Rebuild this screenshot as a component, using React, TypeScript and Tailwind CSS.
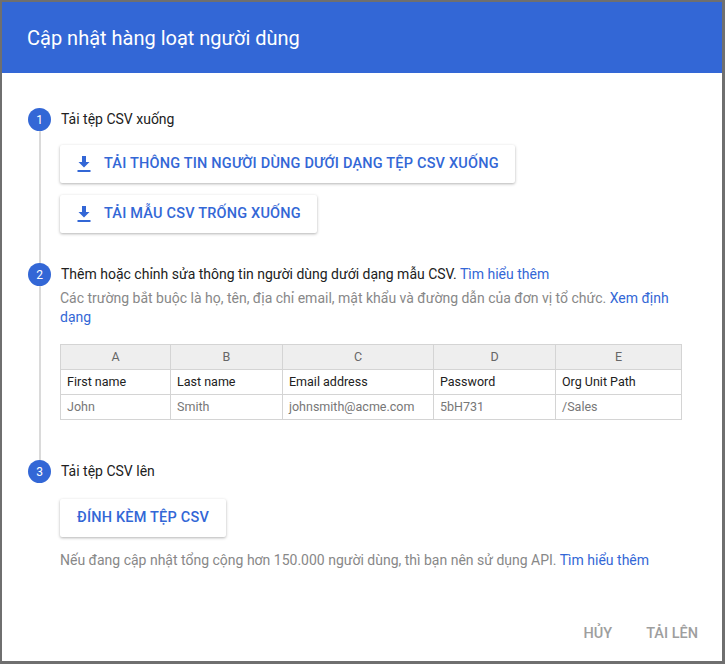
import React from "react";

const Dl = () => (
  <svg width="16" height="18" viewBox="0 0 16 18" className="shrink-0">
    <path d="M6 1h4v6h3.5L8 12.5 2.5 7H6z" fill="#3367d6" />
    <rect x="1.5" y="15" width="13" height="2" fill="#3367d6" />
  </svg>
);

const Circle = ({ n }: { n: number }) => (
  <div className="w-[23px] h-[23px] rounded-full bg-[#3367d6] text-white text-[12px] flex items-center justify-center shrink-0 z-10">{n}</div>
);

const btn = "h-[38px] bg-white rounded-[2px] shadow-[0_1px_3px_rgba(0,0,0,0.3)] flex items-center text-[#3367d6] text-[14.5px] font-medium tracking-[0.2px]";

export default function App() {
  const cols = [
    ["A", "First name", "John", "w-[110px]"],
    ["B", "Last name", "Smith", "w-[112px]"],
    ["C", "Email address", "johnsmith@acme.com", "w-[151px]"],
    ["D", "Password", "5bH731", "w-[122px]"],
    ["E", "Org Unit Path", "/Sales", "flex-1"],
  ];
  return (
    <div className="w-[725px] h-[664px] bg-[#6f6f6f] pt-[2px] pl-[2px] pr-[3px] pb-[3px]" style={{ fontFamily: "Roboto, 'Noto Sans', sans-serif" }}>
      <div className="w-full h-full bg-white flex flex-col">
        <div className="h-[71px] bg-[#3367d6] text-white text-[20px] flex items-center pl-[25px] shrink-0">Cập nhật hàng loạt người dùng</div>
        <div className="relative flex-1 pl-[26px] pr-[40px] pt-[35px]">
          <div className="absolute left-[37px] top-[50px] w-[2px] h-[345px] bg-[#dadada]" />
          <div className="flex items-center gap-[10px]">
            <Circle n={1} />
            <span className="text-[14px] text-[#212121]">Tải tệp CSV xuống</span>
          </div>
          <div className="pl-[32px] mt-[14px] flex flex-col items-start gap-[12px]">
            <div className={btn + " px-[16px] gap-[12px]"}><Dl />TẢI THÔNG TIN NGƯỜI DÙNG DƯỚI DẠNG TỆP CSV XUỐNG</div>
            <div className={btn + " px-[16px] gap-[12px]"}><Dl />TẢI MẪU CSV TRỐNG XUỐNG</div>
          </div>
          <div className="flex items-center gap-[10px] mt-[30px]">
            <Circle n={2} />
            <span className="text-[14px] text-[#212121]">Thêm hoặc chỉnh sửa thông tin người dùng dưới dạng mẫu CSV. <span className="text-[#3367d6]">Tìm hiểu thêm</span></span>
          </div>
          <div className="pl-[32px] mt-[3px] text-[14px] text-[#888] leading-[19px]">
            Các trường bắt buộc là họ, tên, địa chỉ email, mật khẩu và đường dẫn của đơn vị tổ chức. <span className="text-[#3367d6]">Xem định dạng</span>
          </div>
          <div className="ml-[32px] mt-[17px] w-[622px] border border-[#d4d4d4] text-[12.5px] flex">
            {cols.map(([h, a, b, w], i) => (
              <div key={h} className={`${w} flex flex-col ${i < 4 ? "border-r border-[#d4d4d4]" : ""}`}>
                <div className="h-[25px] bg-[#eeeeee] text-[#666] flex items-center justify-center border-b border-[#d4d4d4]">{h}</div>
                <div className="h-[25px] text-[#212121] flex items-center px-[6px] border-b border-[#d4d4d4]">{a}</div>
                <div className="h-[24px] text-[#777] flex items-center px-[6px]">{b}</div>
              </div>
            ))}
          </div>
          <div className="flex items-center gap-[10px] mt-[40px]">
            <Circle n={3} />
            <span className="text-[14px] text-[#212121]">Tải tệp CSV lên</span>
          </div>
          <div className="pl-[32px] mt-[16px]">
            <div className={btn + " px-[17px] inline-flex"}>ĐÍNH KÈM TỆP CSV</div>
          </div>
          <div className="pl-[32px] mt-[13px] text-[14px] text-[#888]">
            Nếu đang cập nhật tổng cộng hơn 150.000 người dùng, thì bạn nên sử dụng API. <span className="text-[#3367d6]">Tìm hiểu thêm</span>
          </div>
          <div className="absolute right-[24px] bottom-[16px] flex gap-[34px] text-[14.5px] font-medium text-[#9e9e9e]">
            <span>HỦY</span>
            <span>TẢI LÊN</span>
          </div>
        </div>
      </div>
    </div>
  );
}
